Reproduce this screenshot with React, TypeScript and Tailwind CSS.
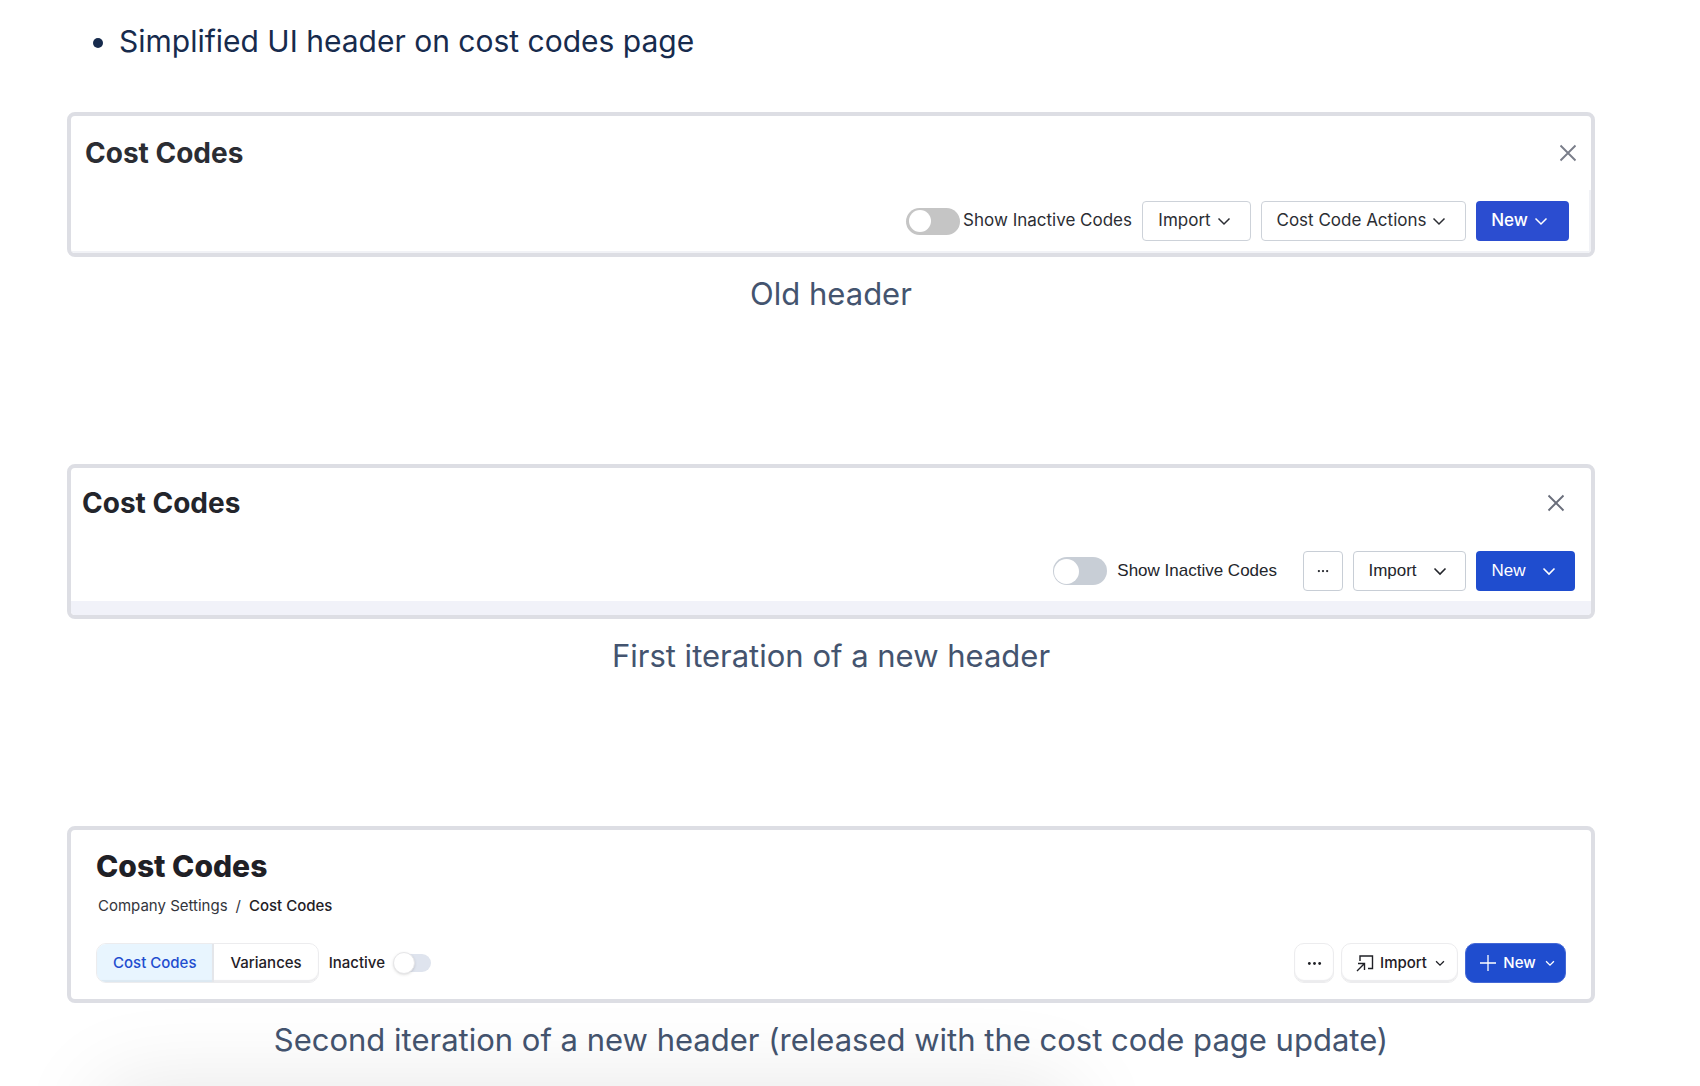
import React from "react";
import clsx from "clsx";

const TOGGLE_BASE =
  "flex shrink-0 appearance-none items-center rounded-full before:block before:rounded-full before:bg-white before:content-['']";

const BUTTON_BASE =
  "flex items-center justify-center whitespace-nowrap cursor-pointer";

const Chevron = ({ size, stroke = 1.5 }: { size: number; stroke?: number }) => (
  <svg
    width={size}
    height={size}
    viewBox="0 0 14 14"
    fill="none"
    stroke="currentColor"
    strokeWidth={stroke}
    aria-hidden="true"
  >
    <path d="M1.5 4.5 7 10l5.5-5.5" />
  </svg>
);

const Cross = () => (
  <svg
    width="18"
    height="18"
    viewBox="0 0 18 18"
    fill="none"
    stroke="currentColor"
    strokeWidth="1.9"
    aria-hidden="true"
  >
    <path d="M1.5 1.5l15 15M16.5 1.5l-15 15" />
  </svg>
);

const Dots = ({ size, radius }: { size: number; radius: number }) => (
  <svg
    width={size}
    height={size}
    viewBox="0 0 16 16"
    fill="currentColor"
    aria-hidden="true"
  >
    <circle cx="2.5" cy="8" r={radius} />
    <circle cx="8" cy="8" r={radius} />
    <circle cx="13.5" cy="8" r={radius} />
  </svg>
);

const ImportIcon = () => (
  <svg
    width="18"
    height="18"
    viewBox="0 0 18 18"
    fill="none"
    stroke="currentColor"
    strokeWidth="1.4"
    aria-hidden="true"
  >
    <path d="M4 7V2h12.5v12.5H12" />
    <path d="M1 17l7.5-7.5M2 9.5h6.5V16" />
  </svg>
);

const PlusIcon = () => (
  <svg
    width="16"
    height="16"
    viewBox="0 0 16 16"
    fill="none"
    stroke="currentColor"
    strokeWidth="1.3"
    aria-hidden="true"
  >
    <path d="M8 0v16M0 8h16" />
  </svg>
);

const Frame = ({
  caption,
  children,
}: {
  caption: string;
  children: React.ReactNode;
}) => (
  <figure>
    <div className="overflow-hidden rounded-lg border-4 border-[#dddee4] bg-white">
      {children}
    </div>
    <figcaption className="mt-[13px] text-center text-[31px] leading-12 text-[#44546f]">
      {caption}
    </figcaption>
  </figure>
);

const OldHeader = () => (
  <header className="border-b-2 border-[#f1f2f6] pt-[17px] text-[#2b2d33]">
    <div className="flex items-center justify-between px-3.5">
      <h2 className="text-[28px] leading-10 font-bold">Cost Codes</h2>
      <button className="cursor-pointer text-[#7a7e8a]" aria-label="Close">
        <Cross />
      </button>
    </div>
    <div className="mt-[17px] flex items-center justify-end gap-2.5 border-r-2 border-[#f1f2f6] pt-[11px] pr-5 pb-2.5 text-[17px]">
      <label className="flex items-center gap-[3px]">
        <input
          type="checkbox"
          role="switch"
          className={clsx(
            TOGGLE_BASE,
            "h-[27px] w-[54px] bg-[#c5c5c5] pl-[3px] before:size-[22px]"
          )}
        />
        Show Inactive Codes
      </label>
      <button
        className={clsx(
          BUTTON_BASE,
          "h-10 w-[109px] gap-1.5 rounded border border-[#cdd2d9] pr-1"
        )}
      >
        Import <Chevron size={14} />
      </button>
      <button
        className={clsx(
          BUTTON_BASE,
          "h-10 w-[205px] gap-1.5 rounded border border-[#cdd2d9] pr-1"
        )}
      >
        Cost Code Actions <Chevron size={14} />
      </button>
      <button
        className={clsx(
          BUTTON_BASE,
          "h-10 w-[93px] gap-1.5 rounded bg-[#2b4dd0] pr-1.5 font-medium text-white"
        )}
      >
        New <Chevron size={14} />
      </button>
    </div>
  </header>
);

const FirstIteration = () => (
  <header className="border-b-14 border-[#f1f2f9] pt-[15px] pr-4 pb-2.5 pl-[11px] text-[#23252b]">
    <div className="flex items-center justify-between pr-2.5">
      <h2 className="text-[28px] leading-10 font-bold">Cost Codes</h2>
      <button className="cursor-pointer text-[#6a6e7b]" aria-label="Close">
        <Cross />
      </button>
    </div>
    <div className="mt-7 flex items-center justify-end gap-2.5 font-['Liberation_Sans',Arial,sans-serif] text-[17px]">
      <label className="mr-4 flex items-center gap-2.5">
        <input
          type="checkbox"
          role="switch"
          className={clsx(
            TOGGLE_BASE,
            "h-7 w-[54px] bg-[#c8ced6] pl-px before:size-[25px]"
          )}
        />
        Show Inactive Codes
      </label>
      <button
        aria-label="More actions"
        className={clsx(
          BUTTON_BASE,
          "size-10 rounded border border-[#c8ced6]"
        )}
      >
        <Dots size={12} radius={1.5} />
      </button>
      <button
        className={clsx(
          BUTTON_BASE,
          "h-10 w-[113px] gap-4 rounded border border-[#c8ced6] pr-1"
        )}
      >
        Import <Chevron size={14} stroke={1.6} />
      </button>
      <button
        className={clsx(
          BUTTON_BASE,
          "h-10 w-[99px] gap-4 rounded bg-[#1f4dcf] pr-1 text-white"
        )}
      >
        New <Chevron size={14} stroke={1.6} />
      </button>
    </div>
  </header>
);

const SecondIteration = () => (
  <header className="px-[25px] pt-4 pb-4 text-[#1f2026]">
    <h2 className="text-[30px] leading-10 font-extrabold">Cost Codes</h2>
    <nav
      aria-label="Breadcrumb"
      className="mt-2 flex gap-2 pl-0.5 text-[15px] leading-6"
    >
      <a href="#" className="text-[#33353c]">
        Company Settings
      </a>
      <span className="text-[#33353c]">/</span>
      <span className="font-medium">Cost Codes</span>
    </nav>
    <div className="mt-[25px] flex items-center justify-between text-[15px] font-medium">
      <div className="flex items-center gap-2.5">
        <div className="flex h-10 overflow-hidden rounded-[10px] border border-[#ececee] shadow-[inset_0_-2px_1px_#ececee]">
          <button className="cursor-pointer bg-[#e8f5fe] px-4 text-[#1f4dcf] shadow-[inset_0_-2px_1px_#dce8f1]">
            Cost Codes
          </button>
          <button className="cursor-pointer border-l-2 border-[#e4e6ea] px-4">
            Variances
          </button>
        </div>
        <label className="flex items-center gap-2">
          Inactive
          <input
            type="checkbox"
            role="switch"
            className={clsx(
              TOGGLE_BASE,
              "ml-1 h-[18px] w-[34px] bg-[#dfe4ee] before:-ml-1 before:size-[22px] before:shrink-0 before:border before:border-[#e6e6e8] before:shadow-sm"
            )}
          />
        </label>
      </div>
      <div className="flex items-center gap-[7px]">
        <button
          aria-label="More actions"
          className={clsx(
            BUTTON_BASE,
            "size-10 rounded-[10px] border border-[#ececee] shadow-[inset_0_-2px_1px_#ececee]"
          )}
        >
          <Dots size={15} radius={1.5} />
        </button>
        <button
          className={clsx(
            BUTTON_BASE,
            "h-10 w-[117px] gap-1.5 rounded-[10px] border border-[#ececee] pl-0.5 shadow-[inset_0_-2px_1px_#ececee]"
          )}
        >
          <ImportIcon />
          Import
          <span className="ml-0.5">
            <Chevron size={10} stroke={1.8} />
          </span>
        </button>
        <button
          className={clsx(
            BUTTON_BASE,
            "h-10 w-[101px] gap-[7px] rounded-[10px] border border-[#4468d6] bg-[#1f4dcf] pl-1 text-white"
          )}
        >
          <PlusIcon />
          New
          <span className="ml-0.5">
            <Chevron size={10} stroke={1.8} />
          </span>
        </button>
      </div>
    </div>
  </header>
);

export default function App() {
  return (
    <main className="relative min-h-screen bg-white pt-[17px] pr-[105px] pl-[67px] font-[Inter,'Liberation_Sans',sans-serif]">
      <ul className="list-disc pl-[52px] text-[30px] leading-12 text-[#172b4d]">
        <li>Simplified UI header on cost codes page</li>
      </ul>
      <div className="mt-[47px] flex flex-col gap-[146px]">
        <Frame caption="Old header">
          <OldHeader />
        </Frame>
        <Frame caption="First iteration of a new header">
          <FirstIteration />
        </Frame>
        <Frame caption="Second iteration of a new header (released with the cost code page update)">
          <SecondIteration />
        </Frame>
      </div>
      {/* shadow of the panel docked under the page */}
      <div className="pointer-events-none fixed top-full right-[37%] left-[6%] h-40 shadow-[0_0_90px_rgba(0,0,0,0.1)]" />
    </main>
  );
}
